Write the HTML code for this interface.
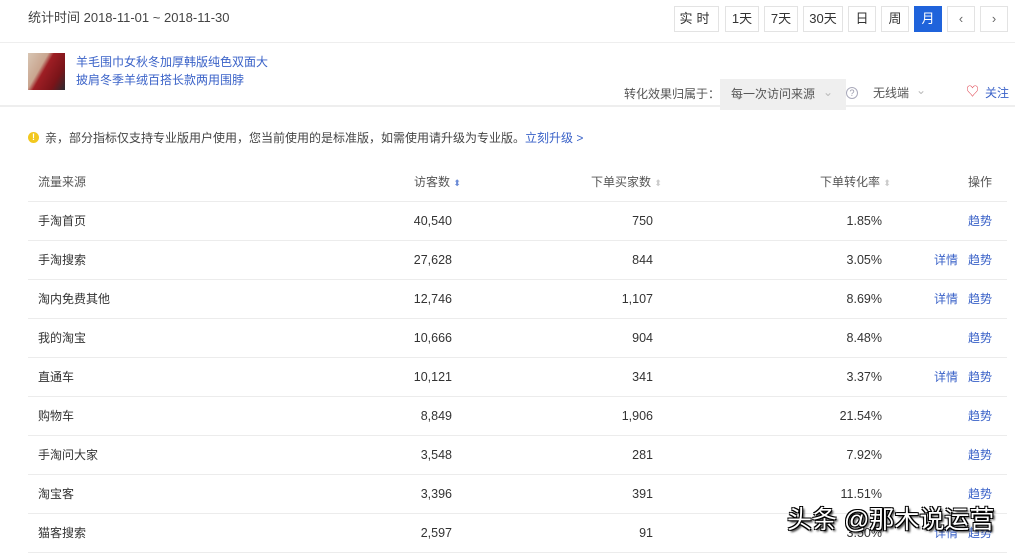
<!DOCTYPE html>
<html><head><meta charset="utf-8"><style>
*{margin:0;padding:0;box-sizing:border-box}
body{width:1015px;height:551px;overflow:hidden;background:#fff;font-family:"Liberation Sans","Noto Sans CJK SC",sans-serif;font-size:12px;color:#333;position:relative}
.a{position:absolute;white-space:nowrap;line-height:16px}
.btn{position:absolute;top:6px;height:26px;border:1px solid #e3e3e3;background:#fff;text-align:center;line-height:24px;font-size:13px;color:#333}
.blue{color:#3a62c8}
.hl{position:absolute;left:28px;width:979px;height:1px;background:#ececec}
.n{font-size:12.5px}
</style></head><body>
<div class="a" style="left:28px;top:10px;font-size:13px;color:#444">统计时间 2018-11-01 ~ 2018-11-30</div>
<div class="btn" style="left:674px;width:45px;letter-spacing:4px">实时</div>
<div class="btn" style="left:725px;width:34px">1天</div>
<div class="btn" style="left:764px;width:34px">7天</div>
<div class="btn" style="left:803px;width:40px">30天</div>
<div class="btn" style="left:848px;width:28px">日</div>
<div class="btn" style="left:881px;width:28px">周</div>
<div class="btn" style="left:914px;width:28px;background:#1f63db;border-color:#1f63db;color:#fff">月</div>
<div class="btn" style="left:947px;width:28px;color:#666">‹</div>
<div class="btn" style="left:980px;width:28px;color:#666">›</div>
<div style="position:absolute;left:0;top:42px;width:1015px;height:1px;background:#eee"></div>
<div style="position:absolute;left:28px;top:53px;width:37px;height:37px;background:linear-gradient(120deg,#d8c6b4 0,#c9a58f 35%,#9e1e24 45%,#7a1419 75%,#2a2a30 100%)"></div>
<div class="a blue" style="left:76px;top:54px;font-size:12px">羊毛围巾女秋冬加厚韩版纯色双面大</div>
<div class="a blue" style="left:76px;top:72px;font-size:12px">披肩冬季羊绒百搭长款两用围脖</div>
<div style="position:absolute;left:0;top:105px;width:1015px;height:2px;background:#eee"></div>
<div class="a" style="left:624px;top:86px;color:#555">转化效果归属于：</div>
<div style="position:absolute;left:720px;top:79px;width:126px;height:31px;background:#efefef"></div>
<div class="a" style="left:731px;top:86px;color:#555">每一次访问来源</div>
<div class="a" style="left:823px;top:84px;color:#bbb">⌄</div>
<div class="a" style="left:846px;top:87px;width:12px;height:12px;border:1px solid #aab;border-radius:50%;font-size:9px;line-height:10px;text-align:center;color:#99a">?</div>
<div class="a" style="left:873px;top:85px;color:#555">无线端</div>
<div class="a" style="left:916px;top:82px;color:#bbb">⌄</div>
<div class="a" style="left:966px;top:84px;color:#e0434f;font-size:13px">♡</div>
<div class="a blue" style="left:985px;top:85px">关注</div>
<div class="a" style="left:28px;top:132px;width:11px;height:11px;border-radius:50%;background:#f2c81f;color:#fff;font-size:9px;line-height:11px;text-align:center;font-weight:bold">!</div>
<div class="a" style="left:45px;top:130px;color:#444">亲，部分指标仅支持专业版用户使用，您当前使用的是标准版，如需使用请升级为专业版。<span class="blue">立刻升级 &gt;</span></div>
<div class="a" style="left:38px;top:174px;color:#555">流量来源</div>
<div class="a" style="left:414px;top:174px;color:#555">访客数 <span style="color:#6b8bd6;font-size:9px">⬍</span></div>
<div class="a" style="left:591px;top:174px;color:#555">下单买家数 <span style="color:#ccc;font-size:9px">⬍</span></div>
<div class="a" style="left:820px;top:174px;color:#555">下单转化率 <span style="color:#ccc;font-size:9px">⬍</span></div>
<div class="a" style="left:968px;top:174px;color:#555">操作</div>
<div class="hl" style="top:201px"></div>
<div id="rows"></div>
<script>
var d=[["手淘首页","40,540","750","1.85%",0],["手淘搜索","27,628","844","3.05%",1],["淘内免费其他","12,746","1,107","8.69%",1],["我的淘宝","10,666","904","8.48%",0],["直通车","10,121","341","3.37%",1],["购物车","8,849","1,906","21.54%",0],["手淘问大家","3,548","281","7.92%",0],["淘宝客","3,396","391","11.51%",0],["猫客搜索","2,597","91","3.50%",1]];
var h="";
d.forEach(function(r,i){var t=213+i*39;
h+='<div class="a" style="left:38px;top:'+t+'px">'+r[0]+'</div>';
h+='<div class="a n" style="right:563px;top:'+t+'px">'+r[1]+'</div>';
h+='<div class="a n" style="right:362px;top:'+t+'px">'+r[2]+'</div>';
h+='<div class="a n" style="right:133px;top:'+t+'px">'+r[3]+'</div>';
if(r[4])h+='<div class="a blue" style="left:934px;top:'+t+'px">详情</div>';
h+='<div class="a blue" style="left:968px;top:'+t+'px">趋势</div>';
h+='<div class="hl" style="top:'+(t+27)+'px"></div>';});
document.getElementById("rows").innerHTML=h;
</script>
<div class="a" style="left:787px;top:504px;font-size:25px;line-height:32px;color:#fff;text-shadow:1px 1px 0 #000,-1px -1px 0 #000,1px -1px 0 #000,-1px 1px 0 #000,2px 2px 2px #000">头条 @那木说运营</div>
</body></html>
